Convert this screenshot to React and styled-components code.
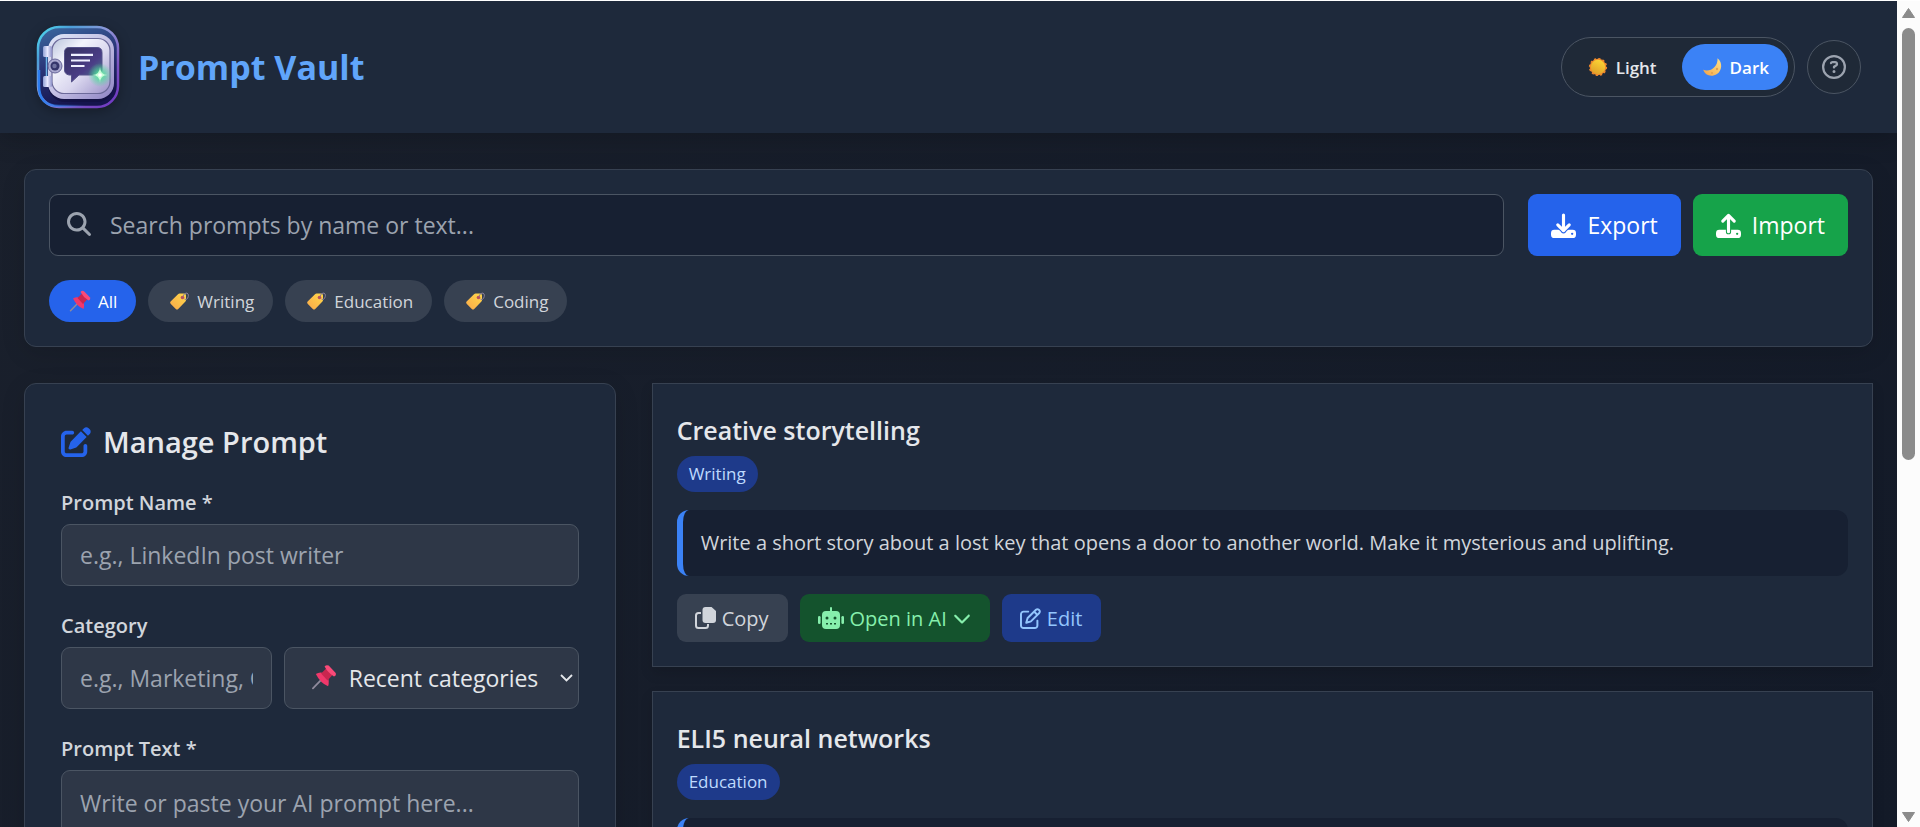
import React, { useState } from 'react';
import styled, { createGlobalStyle } from 'styled-components';
import {
  FaMagnifyingGlass,
  FaPenToSquare,
  FaRegPenToSquare,
  FaRegCircleQuestion,
  FaChevronDown,
} from 'react-icons/fa6';

const GlobalStyle = createGlobalStyle`
  * {
    box-sizing: border-box;
  }

  body {
    margin: 0;
    color: #e5e7eb;
    background: #151b28;
    font-family: 'Segoe UI', 'Open Sans', 'Noto Sans', sans-serif;
    font-size: 23px;
  }

  button, input, select, textarea {
    font-family: inherit;
    font-size: inherit;
    color: inherit;
  }

  h1, h2, h3, p {
    margin: 0;
  }
`;

// Styled Components
const Shell = styled.div`
  display: flex;
  height: 100vh;
  overflow: hidden;
  border-top: 1px solid #fff;
`;

const Page = styled.div`
  flex: 1;
  min-width: 0;
  overflow-y: auto;
  scrollbar-width: none;
  background: linear-gradient(135deg, #1a202c 0%, #131a28 100%);
`;

const Header = styled.header`
  display: flex;
  align-items: center;
  justify-content: space-between;
  padding: 24px 36px;
  background: #1e293b;
  box-shadow: 0 6px 24px rgba(0, 0, 0, 0.2);
`;

const Brand = styled.div`
  display: flex;
  align-items: center;
  gap: 18px;

  svg {
    display: block;
    filter: drop-shadow(0 3px 6px rgba(0, 0, 0, 0.3));
  }
`;

const BrandTitle = styled.h1`
  font-size: 34px;
  line-height: 48px;
  font-weight: 700;
  color: #60a5fa;
`;

const HeaderActions = styled.div`
  display: flex;
  align-items: center;
  gap: 12px;
`;

const ThemeToggle = styled.div`
  display: flex;
  gap: 6px;
  padding: 6px;
  border: 1px solid #4b5563;
  border-radius: 30px;
  background: #1f2937;
`;

const ThemeButton = styled.button`
  display: flex;
  align-items: center;
  gap: 6px;
  height: 46px;
  padding: 0 19px 0 18px;
  border: none;
  border-radius: 23px;
  font-size: 17px;
  font-weight: 600;
  cursor: pointer;
  color: ${props => props.$active ? '#fff' : '#e5e7eb'};
  background: ${props => props.$active ? '#3b82f6' : 'transparent'};
`;

const HelpButton = styled.button`
  display: flex;
  align-items: center;
  justify-content: center;
  width: 54px;
  height: 54px;
  border: 1px solid #4b5563;
  border-radius: 50%;
  color: #9ca3af;
  background: #1f2937;
  cursor: pointer;
`;

const Main = styled.main`
  display: flex;
  flex-direction: column;
  gap: 36px;
  padding: 36px 24px;
`;

const Card = styled.section`
  padding: ${props => props.$roomy ? '36px' : '24px'};
  border: 1px solid #374151;
  border-radius: 12px;
  background: #1e293b;
  box-shadow: 0 6px 24px rgba(0, 0, 0, 0.12);
`;

const SearchRow = styled.div`
  display: flex;
  gap: 12px;
`;

const SearchBox = styled.div`
  position: relative;
  flex: 1;
  margin-right: 12px;

  svg {
    position: absolute;
    top: 18px;
    left: 18px;
    color: #9ca3af;
  }
`;

const Field = styled.input`
  display: block;
  width: 100%;
  min-width: 0;
  height: 62px;
  padding: 0 18px;
  border: 1px solid #4b5563;
  border-radius: 9px;
  background: #2e3747;
  outline: none;

  &::placeholder {
    color: #9ca3af;
    opacity: 1;
  }
`;

const SearchField = styled(Field)`
  padding-left: 60px;
  background: #172032;
`;

const TransferButton = styled.button`
  display: flex;
  align-items: center;
  gap: 11px;
  height: 62px;
  padding: 0 23px;
  border: none;
  border-radius: 9px;
  color: #fff;
  background: ${props => props.$color};
  cursor: pointer;
`;

const Pills = styled.div`
  display: flex;
  flex-wrap: wrap;
  gap: 12px;
  margin-top: 24px;
`;

const Pill = styled.button`
  display: flex;
  align-items: center;
  gap: 6px;
  height: 42px;
  padding: 0 19px;
  border: none;
  border-radius: 21px;
  font-size: 17px;
  color: ${props => props.$active ? '#fff' : '#d1d5db'};
  background: ${props => props.$active ? '#2563eb' : '#374151'};
  cursor: pointer;
`;

const Columns = styled.div`
  display: grid;
  grid-template-columns: minmax(0, 32%) minmax(0, 1fr);
  gap: 36px;
`;

const FormTitle = styled.h2`
  display: flex;
  align-items: center;
  gap: 12px;
  margin-bottom: 24px;
  font-size: 29px;
  line-height: 44px;
  font-weight: 600;

  svg {
    color: #2563eb;
  }
`;

const FormGroup = styled.div`
  margin-bottom: 25px;
`;

const Label = styled.label`
  display: block;
  margin-bottom: 7px;
  font-size: 20px;
  line-height: 29px;
  font-weight: 600;
  color: #d1d5db;
`;

const CategoryRow = styled.div`
  display: grid;
  grid-template-columns: 5fr 7fr;
  gap: 12px;
`;

const SelectWrap = styled.div`
  position: relative;

  svg {
    position: absolute;
    top: 16px;
    pointer-events: none;
  }

  svg:first-child {
    left: 26px;
  }

  svg:last-child {
    top: 24px;
    right: 6px;
  }
`;

const Select = styled(Field)`
  padding-left: 64px;
  appearance: none;
`;

const TextArea = styled(Field)`
  height: 240px;
  padding: 16px 18px;
  resize: vertical;
`;

const PromptList = styled.div`
  display: flex;
  flex-direction: column;
  gap: 24px;
`;

const PromptCard = styled.article`
  padding: 24px;
  border: 1px solid #374151;
  background: #1e293b;
  box-shadow: 0 6px 12px rgba(0, 0, 0, 0.12);
`;

const PromptTitle = styled.h3`
  margin-bottom: 4px;
  font-size: 25px;
  line-height: 44px;
  font-weight: 600;
`;

const Badge = styled.span`
  display: block;
  width: fit-content;
  padding: 0 12px;
  border-radius: 18px;
  font-size: 17px;
  line-height: 36px;
  color: #bfdbfe;
  background: #1e3a8a;
`;

const Quote = styled.p`
  margin: 18px 0;
  padding: 18px;
  border-left: 6px solid #3b82f6;
  border-radius: 12px;
  font-size: 20px;
  line-height: 30px;
  color: #d1d5db;
  background: #172032;
`;

const CardActions = styled.div`
  display: flex;
  gap: 12px;
`;

const ActionButton = styled.button`
  display: flex;
  align-items: center;
  gap: 6px;
  height: 48px;
  padding: 0 19px 0 18px;
  border: none;
  border-radius: 9px;
  font-size: 20px;
  color: ${props => props.$color};
  background: ${props => props.$bg};
  cursor: pointer;
`;

const ScrollTrack = styled.div`
  display: flex;
  flex-direction: column;
  align-items: center;
  width: 23px;
  padding: 6px 0 4px;
  background: #fcfcfc;
`;

const ScrollThumb = styled.div`
  width: 13px;
  height: 53%;
  margin: 9px 0 auto;
  border-radius: 7px;
  background: #8b8b8b;
`;

// Icons
const LogoIcon = () => (
  <svg width="84" height="84" viewBox="0 0 84 84" aria-hidden="true">
    <defs>
      <linearGradient id="rim" x1="0" y1="0" x2="1" y2="1">
        <stop offset="0" stopColor="#4fe0f0" />
        <stop offset="0.2" stopColor="#4b9fd8" />
        <stop offset="0.45" stopColor="#8f96d8" />
        <stop offset="0.75" stopColor="#7a4fc0" />
        <stop offset="1" stopColor="#6d35c4" />
      </linearGradient>
      <linearGradient id="shell" x1="0" y1="0" x2="0.3" y2="1">
        <stop offset="0" stopColor="#3c6aa0" />
        <stop offset="0.5" stopColor="#2a3578" />
        <stop offset="1" stopColor="#15144d" />
      </linearGradient>
      <linearGradient id="blueEdge" x1="0" y1="0" x2="1" y2="0">
        <stop offset="0" stopColor="#2c7df0" />
        <stop offset="1" stopColor="#2c7df0" stopOpacity="0" />
      </linearGradient>
      <linearGradient id="frame" x1="0" y1="0" x2="1" y2="1">
        <stop offset="0" stopColor="#dfe6f8" />
        <stop offset="0.5" stopColor="#c4c0e4" />
        <stop offset="1" stopColor="#8e84c4" />
      </linearGradient>
      <linearGradient id="door" x1="0" y1="0" x2="1" y2="1">
        <stop offset="0" stopColor="#b9c4dc" />
        <stop offset="0.3" stopColor="#f3f4fc" />
        <stop offset="0.6" stopColor="#d9d6ee" />
        <stop offset="1" stopColor="#9a90c8" />
      </linearGradient>
      <linearGradient id="bubble" x1="0" y1="0" x2="1" y2="1">
        <stop offset="0" stopColor="#343160" />
        <stop offset="0.6" stopColor="#4a3d86" />
        <stop offset="1" stopColor="#4b8a90" />
      </linearGradient>
      <linearGradient id="hinge" x1="0" y1="0" x2="1" y2="0">
        <stop offset="0" stopColor="#8f9fd4" />
        <stop offset="0.5" stopColor="#e8e8ff" />
        <stop offset="1" stopColor="#8b8fc6" />
      </linearGradient>
      <radialGradient id="glow">
        <stop offset="0" stopColor="#6cf5a2" />
        <stop offset="0.4" stopColor="#4fdc9a" stopOpacity="0.7" />
        <stop offset="1" stopColor="#4fdc9a" stopOpacity="0" />
      </radialGradient>
    </defs>
    <rect x="2" y="2" width="80" height="80" rx="21" fill="url(#shell)" stroke="url(#rim)" strokeWidth="2.5" />
    <path d="M3 45V61Q3 81 23 81H50" fill="none" stroke="url(#blueEdge)" strokeWidth="2.5" />
    <rect x="12" y="12" width="66" height="65" rx="17" fill="#11103f" opacity="0.7" />
    <rect x="12" y="9" width="66" height="65" rx="16" fill="url(#frame)" />
    <rect x="16" y="13.500" width="58" height="55" rx="12" fill="url(#door)" stroke="#6c6a9a" strokeWidth="1.200" />
    <path d="M10.500 30V54" stroke="#6fb6e8" strokeWidth="1.500" />
    <rect x="7" y="21" width="9" height="11" rx="1.500" fill="url(#hinge)" />
    <rect x="7" y="51" width="9" height="11" rx="1.500" fill="url(#hinge)" />
    <circle cx="19" cy="41" r="7" fill="#a9a8cf" stroke="#67669a" />
    <circle cx="19" cy="41" r="4.500" fill="#34356b" />
    <circle cx="18.500" cy="41" r="2.200" fill="#6e719f" />
    <path
      d="M33 22.500H61Q66 22.500 66 27.500V45Q66 50 61 50H43L35.500 57V50H33Q28.500 49 28.500 45V27.500Q28.500 22.500 33 22.500Z"
      fill="url(#bubble)"
      stroke="#55528a"
    />
    <path d="M35 29.800H57M35 35.500H54M35 41H48.500" stroke="#eef0ff" strokeWidth="2.200" />
    <circle cx="64" cy="50" r="12" fill="url(#glow)" />
    <path d="M64 42Q64.200 49.800 71.500 50Q64.200 50.200 64 58Q63.800 50.200 56 50Q63.800 49.800 64 42Z" fill="#c8ffd8" />
    <circle cx="64" cy="50" r="1.800" fill="#fff" />
  </svg>
);

const SunIcon = () => (
  <svg width="24" height="24" viewBox="0 0 24 24" aria-hidden="true">
    <defs>
      <linearGradient id="sunFace" x1="0.8" y1="0" x2="0.3" y2="1">
        <stop offset="0" stopColor="#fdd835" />
        <stop offset="1" stopColor="#e0a029" />
      </linearGradient>
    </defs>
    <circle cx="12" cy="12" r="8.300" fill="#f08a2c" />
    <circle cx="12" cy="12" r="8.300" fill="none" stroke="#f08a2c" strokeWidth="1.600" strokeDasharray="2.200 2.146" />
    <circle cx="12" cy="12" r="7.200" fill="url(#sunFace)" />
  </svg>
);

const MoonIcon = () => (
  <svg width="24" height="24" viewBox="0 0 24 24" aria-hidden="true">
    <defs>
      <linearGradient id="moonFace" x1="1" y1="0" x2="0" y2="1">
        <stop offset="0" stopColor="#ffe08a" />
        <stop offset="0.6" stopColor="#f8bf62" />
        <stop offset="1" stopColor="#f0a04c" />
      </linearGradient>
    </defs>
    <path
      d="M17.500 3.200C23 7 22 16 17 19C11.500 22.500 5 20.500 3.200 14.800C10 17.500 18.200 12 17.500 3.200Z"
      fill="url(#moonFace)"
    />
    <circle cx="17" cy="14" r="1.200" fill="#e0a050" />
    <circle cx="12" cy="18" r="1" fill="#e0a050" />
  </svg>
);

const PinIcon = ({ size = 24 }) => (
  <svg width={size} height={size} viewBox="0 0 24 24" aria-hidden="true">
    <path d="M10 14L2.500 21.800" stroke="#8f8a9c" strokeWidth="1.500" strokeLinecap="round" />
    <path d="M5 9.500Q8 7.500 11.500 8.600L15 12.500Q17 15.500 15.500 20Q9 17.500 5 9.500Z" fill="#f0386b" />
    <path d="M9.500 9L14.500 4L20 9.500L15 15Z" fill="#c9264f" />
    <path d="M12.500 3Q14 1.200 16 2.200L22 8.500Q22.800 10.800 20.500 11.500Q15.500 8.500 12.500 3Z" fill="#fa4a78" />
  </svg>
);

const TagIcon = () => (
  <svg width="24" height="24" viewBox="0 0 24 24" aria-hidden="true">
    <defs>
      <linearGradient id="tagFace" x1="1" y1="0" x2="0" y2="1">
        <stop offset="0" stopColor="#ffd84a" />
        <stop offset="1" stopColor="#f9a84a" />
      </linearGradient>
    </defs>
    <path
      d="M12.500 4.500H17Q19 4.500 19 6.500V11Q19 12 18.200 12.800L11.200 20Q10 21 8.800 20L3.600 14.800Q2.600 13.600 3.600 12.500L11 5.200Q11.700 4.500 12.500 4.500Z"
      fill="url(#tagFace)"
    />
    <circle cx="15.500" cy="8.500" r="1.800" fill="#b8505c" />
    <path d="M16 7.500Q17 3.500 20 4Q22.500 5.500 20.500 9.500Q19 11.500 17.500 10" fill="none" stroke="#8a7f98" strokeWidth="1" />
  </svg>
);

// cut is the colour behind the icon, it keeps the arrow apart from the tray
const TransferIcon = ({ up, cut }) => {
  const arrow = up ? 'M12 18V2.500M6.500 7.800L12 2.300L17.500 7.800' : 'M12 2V17M6.500 11.500L12 17L17.500 11.500';
  return (
    <svg width="25" height="25" viewBox="0 0 24 24" fill="none" strokeLinecap="round" strokeLinejoin="round" aria-hidden="true">
      <rect x="0" y="16" width="24" height="8" rx="3.200" fill="#fff" />
      <path d={arrow} stroke={cut} strokeWidth="5" />
      <path d={arrow} stroke="#fff" strokeWidth="3" />
      <circle cx="20.300" cy="20" r="1.100" fill={cut} />
    </svg>
  );
};

const CopyIcon = () => (
  <svg width="21" height="22" viewBox="0 0 21 22" aria-hidden="true">
    <path
      d="M6 6H3.500Q1 6 1 8.500V18.500Q1 21 3.500 21H10.500Q13 21 13 18.500V17"
      fill="none"
      stroke="currentColor"
      strokeWidth="2"
    />
    <path d="M10.500 0H16.500L21 4V13Q21 16 18 16H10.500Q7.500 16 7.500 13V3Q7.500 0 10.500 0Z" fill="currentColor" />
  </svg>
);

const RobotIcon = () => (
  <svg width="26" height="22" viewBox="0 0 26 22" fill="currentColor" aria-hidden="true">
    <rect x="12" y="0" width="2" height="6" rx="1" />
    <path
      fillRule="evenodd"
      d="M8 4H18Q22 4 22 8V18Q22 22 18 22H8Q4 22 4 18V8Q4 4 8 4ZM9 9.500A1.500 1.500 0 1 0 9 12.500A1.500 1.500 0 1 0 9 9.500ZM17 9.500A1.500 1.500 0 1 0 17 12.500A1.500 1.500 0 1 0 17 9.500ZM8 16V17.500H10V16ZM12 16V17.500H14V16ZM16 16V17.500H18V16Z"
    />
    <rect x="0" y="9" width="2.600" height="8" rx="1.300" />
    <rect x="23.400" y="9" width="2.600" height="8" rx="1.300" />
  </svg>
);

const SelectArrow = () => (
  <svg width="13" height="13" viewBox="0 0 13 13" aria-hidden="true">
    <path d="M1 4L6.500 9.500L12 4" fill="none" stroke="#e5e7eb" strokeWidth="1.800" />
  </svg>
);

const ScrollArrow = ({ down }) => (
  <svg width="15" height="12" viewBox="0 0 15 12" aria-hidden="true">
    <path
      d={down ? 'M1.500 1.500H13.500L7.500 10.500Z' : 'M1.500 10.500H13.500L7.500 1.500Z'}
      fill="#8b8b8b"
      stroke="#8b8b8b"
      strokeLinejoin="round"
    />
  </svg>
);

const categories = ['All', 'Writing', 'Education', 'Coding'];

const prompts = [
  {
    name: 'Creative storytelling',
    category: 'Writing',
    text: 'Write a short story about a lost key that opens a door to another world. Make it mysterious and uplifting.',
  },
  {
    name: 'ELI5 neural networks',
    category: 'Education',
    text: 'Explain neural networks like I am five years old, with a simple everyday example.',
  },
];

const App = () => {
  const [theme, setTheme] = useState('dark');
  const [filter, setFilter] = useState('All');

  return (
    <>
      <GlobalStyle />
      <Shell>
        <Page>
          <Header>
            <Brand>
              <LogoIcon />
              <BrandTitle>Prompt Vault</BrandTitle>
            </Brand>
            <HeaderActions>
              <ThemeToggle>
                <ThemeButton $active={theme === 'light'} onClick={() => setTheme('light')}>
                  <SunIcon /> Light
                </ThemeButton>
                <ThemeButton $active={theme === 'dark'} onClick={() => setTheme('dark')}>
                  <MoonIcon /> Dark
                </ThemeButton>
              </ThemeToggle>
              <HelpButton aria-label="Help">
                <FaRegCircleQuestion size={24} />
              </HelpButton>
            </HeaderActions>
          </Header>

          <Main>
            <Card>
              <SearchRow>
                <SearchBox>
                  <FaMagnifyingGlass size={24} />
                  <SearchField aria-label="Search prompts" placeholder="Search prompts by name or text..." />
                </SearchBox>
                <TransferButton $color="#2563eb">
                  <TransferIcon cut="#2563eb" /> Export
                </TransferButton>
                <TransferButton $color="#16a34a">
                  <TransferIcon up cut="#16a34a" /> Import
                </TransferButton>
              </SearchRow>
              <Pills>
                {categories.map(name => (
                  <Pill key={name} $active={filter === name} onClick={() => setFilter(name)}>
                    {name === 'All' ? <PinIcon /> : <TagIcon />} {name}
                  </Pill>
                ))}
              </Pills>
            </Card>

            <Columns>
              <Card $roomy>
                <FormTitle>
                  <FaPenToSquare size={30} /> Manage Prompt
                </FormTitle>
                <FormGroup>
                  <Label htmlFor="prompt-name">Prompt Name *</Label>
                  <Field id="prompt-name" placeholder="e.g., LinkedIn post writer" />
                </FormGroup>
                <FormGroup>
                  <Label htmlFor="prompt-category">Category</Label>
                  <CategoryRow>
                    <Field id="prompt-category" placeholder="e.g., Marketing, Coding" />
                    <SelectWrap>
                      <PinIcon size={28} />
                      <Select as="select" aria-label="Recent categories">
                        <option>Recent categories</option>
                      </Select>
                      <SelectArrow />
                    </SelectWrap>
                  </CategoryRow>
                </FormGroup>
                <FormGroup>
                  <Label htmlFor="prompt-text">Prompt Text *</Label>
                  <TextArea as="textarea" id="prompt-text" placeholder="Write or paste your AI prompt here..." />
                </FormGroup>
              </Card>

              <PromptList>
                {prompts.map(prompt => (
                  <PromptCard key={prompt.name}>
                    <PromptTitle>{prompt.name}</PromptTitle>
                    <Badge>{prompt.category}</Badge>
                    <Quote>{prompt.text}</Quote>
                    <CardActions>
                      <ActionButton $color="#d1d5db" $bg="#374151">
                        <CopyIcon /> Copy
                      </ActionButton>
                      <ActionButton $color="#86efac" $bg="#14532d">
                        <RobotIcon /> Open in AI <FaChevronDown size={18} />
                      </ActionButton>
                      <ActionButton $color="#93c5fd" $bg="#1e3a8a">
                        <FaRegPenToSquare size={21} /> Edit
                      </ActionButton>
                    </CardActions>
                  </PromptCard>
                ))}
              </PromptList>
            </Columns>
          </Main>
        </Page>
        <ScrollTrack aria-hidden="true">
          <ScrollArrow />
          <ScrollThumb />
          <ScrollArrow down />
        </ScrollTrack>
      </Shell>
    </>
  );
};

export default App;
